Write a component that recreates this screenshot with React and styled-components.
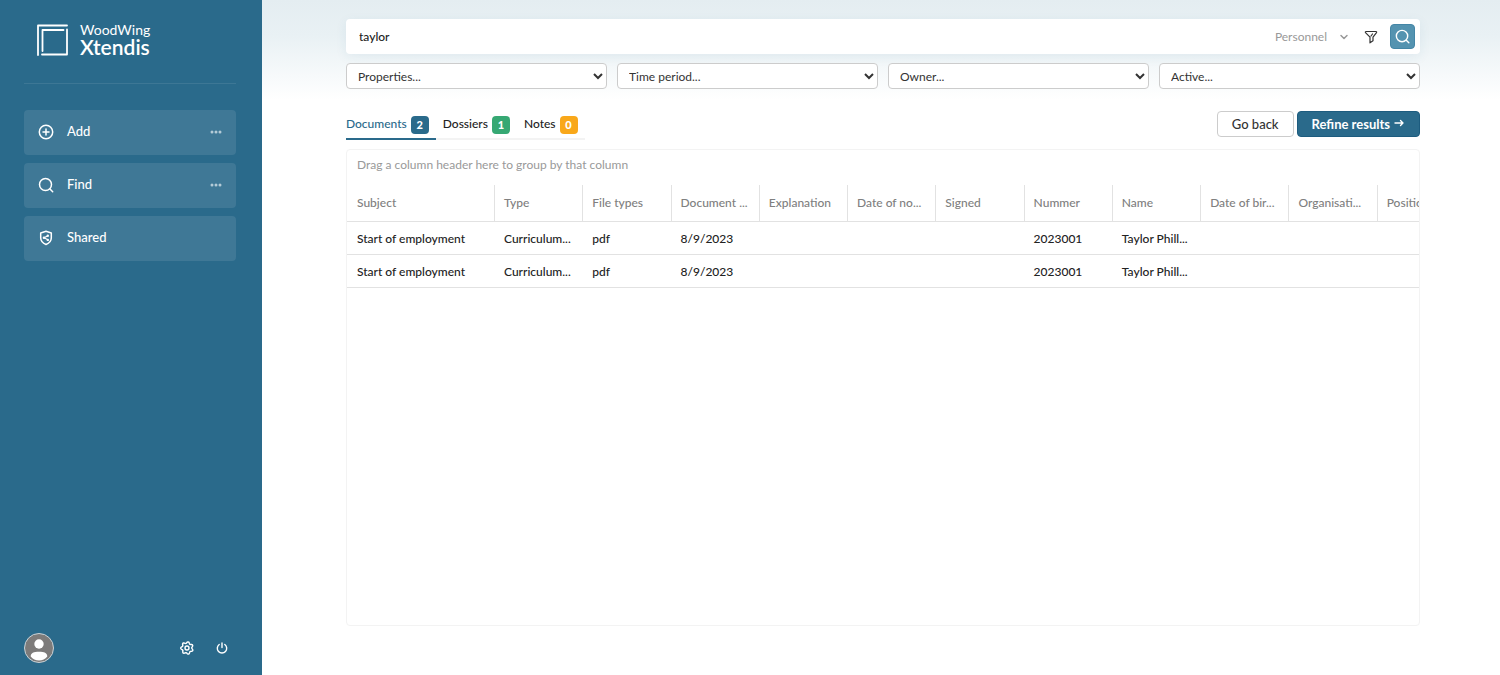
import React from "react";
import styled, { createGlobalStyle } from "styled-components";

const GlobalStyle = createGlobalStyle`
  *, *::before, *::after { box-sizing: border-box; }
  body {
    margin: 0;
    background: #fff;
    color: #222;
    font-family: Lato, "Open Sans", sans-serif;
    font-size: 12px;
    line-height: 16px;
  }
  button, input, select { font: inherit; color: inherit; }
`;

const Page = styled.div`
  display: flex;
  min-height: 100vh;
`;

const Sidebar = styled.aside`
  flex: 0 0 262px;
  display: flex;
  flex-direction: column;
  padding: 20px 26px 11px 24px;
  background: #2a6a8b;
  color: #fff;
`;

const Brand = styled.a`
  display: flex;
  align-items: center;
  gap: 12px;
  height: 64px;
  padding: 0 12px 24px;
  border-bottom: 1px solid #3d7795;
  color: #fff;
  text-decoration: none;
`;

const BrandName = styled.span`
  display: flex;
  flex-direction: column;
  font-size: 14px;
  line-height: 14px;
`;

const ProductName = styled.strong`
  font-size: 21px;
  line-height: 20px;
  font-weight: 600;
`;

const SideNav = styled.nav`
  display: flex;
  flex-direction: column;
  gap: 8px;
  margin-top: 26px;
`;

const NavButton = styled.button`
  display: flex;
  align-items: center;
  gap: 12px;
  height: 45px;
  padding: 0 14px 2px 13px;
  border: 0;
  border-radius: 4px;
  background: #3f7896;
  color: #fff;
  font-size: 13px;
  font-weight: 500;
  text-align: left;
`;

const NavLabel = styled.span`
  flex: 1;
  padding-bottom: 2px;
`;

const SideFooter = styled.div`
  display: flex;
  align-items: center;
  gap: 19px;
  margin-top: auto;
  padding-right: 6px;
`;

const AvatarButton = styled.button`
  width: 32px;
  height: 32px;
  margin-right: auto;
  padding: 0;
  border: 0;
  background: none;
`;

const IconButton = styled.button`
  display: flex;
  padding: 0;
  border: 0;
  background: none;
  color: inherit;
`;

const Main = styled.main`
  flex: 1;
  min-width: 0;
  display: flex;
  flex-direction: column;
  padding: 19px 80px 49px 84px;
  background: linear-gradient(#e4edf1 0, #e9f1f4 36px, #fff 100px);
`;

const SearchBar = styled.form`
  display: flex;
  align-items: center;
  height: 35px;
  padding: 0 5px 0 13px;
  border-radius: 4px;
  background: #fff;
  box-shadow: 0 3px 12px rgba(42, 106, 139, 0.08);
`;

const SearchInput = styled.input`
  flex: 1;
  min-width: 0;
  padding: 0;
  border: 0;
  outline: 0;
  background: none;
  font-weight: 500;
`;

const ScopeButton = styled.button`
  display: flex;
  align-items: center;
  gap: 12px;
  padding: 0;
  border: 0;
  background: none;
  color: #999;
`;

const FilterButton = styled(IconButton)`
  margin: 0 12px 0 15px;
  color: #333;
`;

const SearchButton = styled.button`
  display: flex;
  align-items: center;
  justify-content: center;
  width: 25px;
  height: 25px;
  padding: 0;
  border: 1px solid #4486a6;
  border-radius: 4px;
  background: #5493b0;
  color: #fff;
`;

const Filters = styled.div`
  display: grid;
  grid-template-columns: repeat(4, 1fr);
  gap: 10px;
  margin-top: 9px;
`;

const FilterSelect = styled.select`
  width: 100%;
  height: 26px;
  padding: 0 2px 0 7px;
  border: 1px solid #ccc;
  border-radius: 4px;
  background: #fff;
  color: #333;
`;

const ResultsBar = styled.div`
  display: flex;
  align-items: flex-end;
  justify-content: space-between;
  margin-top: 22px;
`;

const Tabs = styled.div`
  display: flex;
`;

const Tab = styled.button`
  display: flex;
  align-items: center;
  gap: 4px;
  height: 29px;
  padding: 1px 7px 0 0;
  border: 0;
  border-bottom: 2px solid ${(p) => (p["aria-selected"] ? "#2a6a8b" : "#f3f3f3")};
  background: none;
  color: ${(p) => (p["aria-selected"] ? "#2a6a8b" : "#222")};
  font-weight: 500;

  & + & { padding-left: 7px; }
`;

const TabLabel = styled.span`
  padding-bottom: 2px;
`;

const Count = styled.span`
  min-width: 18px;
  height: 18px;
  border-radius: 4px;
  background: ${(p) => p.$color};
  color: #fff;
  font-size: 11px;
  line-height: 18px;
  font-weight: 900;
  text-align: center;
`;

const Actions = styled.div`
  display: flex;
  gap: 3px;
  padding-bottom: 3px;
`;

const ActionButton = styled.button`
  display: flex;
  align-items: center;
  gap: 3px;
  height: 26px;
  padding: 0 14px;
  border: 1px solid ${(p) => (p.$primary ? "#1d5c7f" : "#ccc")};
  border-radius: 4px;
  background: ${(p) => (p.$primary ? "#2a6a8b" : "#fff")};
  color: ${(p) => (p.$primary ? "#fff" : "#333")};
  font-size: 13px;
  font-weight: ${(p) => (p.$primary ? 700 : 500)};
`;

const Panel = styled.section`
  flex: 1;
  margin-top: 9px;
  border: 1px solid #f3f3f3;
  border-radius: 4px;
  background: #fff;
  overflow: hidden;
`;

const GroupHint = styled.p`
  margin: 0;
  padding: 7px 10px 12px;
  color: #999;
`;

const Grid = styled.table`
  width: 100%;
  min-width: 1119px;
  table-layout: fixed;
  border-collapse: separate;
  border-spacing: 0;
`;

const HeadCell = styled.th`
  width: ${(p) => (p.$wide ? "148px" : "auto")};
  height: 37px;
  padding: 0 9px;
  border-right: 1px solid #e2e2e2;
  border-bottom: 1px solid #e2e2e2;
  color: #808080;
  font-weight: 500;
  text-align: left;
  white-space: nowrap;
  overflow: hidden;

  &:first-child { padding-left: 10px; }
`;

const Cell = styled.td`
  height: 33px;
  padding: 1px 9px 0;
  border-bottom: 1px solid #e2e2e2;
  font-weight: 500;
  white-space: nowrap;
  overflow: hidden;

  &:first-child { padding-left: 10px; }
`;

const Icon = ({ size = 16, box = 24, width = 2, children }) => (
  <svg
    width={size}
    height={size}
    viewBox={`0 0 ${box} ${box}`}
    fill="none"
    stroke="currentColor"
    strokeWidth={width}
    strokeLinecap="round"
    strokeLinejoin="round"
    aria-hidden="true"
  >
    {children}
  </svg>
);

const LogoMark = () => (
  <Icon size={32} box={32} width={1.8}>
    <path d="M2 31V1.500H31M6.500 27V6H27.500M31 5.500V30.500H6" />
  </Icon>
);

const PlusIcon = () => (
  <Icon size={18} box={18} width={1.5}>
    <circle cx="9" cy="9" r="6.700" />
    <path d="M9 6v6M6 9h6" />
  </Icon>
);

const MagnifierIcon = ({ size = 18 }) => (
  <Icon size={size} box={18} width={1.5}>
    <circle cx="8.500" cy="8.500" r="6" />
    <path d="M13 13l2.700 2.700" />
  </Icon>
);

const ShieldIcon = () => (
  <Icon size={18} box={18} width={1.5}>
    <path d="M9 2.300 14.300 4v4.800c0 3.400-2.400 5.500-5.300 6.700-2.900-1.200-5.300-3.300-5.300-6.700V4z" />
    <path d="M10.800 6.700 7.200 8.800l3.600 2" strokeWidth="1.100" />
    <g fill="currentColor" stroke="none">
      <circle cx="10.800" cy="6.700" r="1.200" />
      <circle cx="7" cy="8.800" r="1.300" />
      <circle cx="10.800" cy="10.900" r="1.200" />
    </g>
  </Icon>
);

const MoreIcon = () => (
  <svg width="12" height="4" viewBox="0 0 12 4" fill="#b4cbd7" aria-hidden="true">
    <circle cx="2" cy="2" r="1.500" />
    <circle cx="6" cy="2" r="1.500" />
    <circle cx="10" cy="2" r="1.500" />
  </svg>
);

const gearOutline = (() => {
  const points = [];
  for (let i = 0; i < 84; i += 1) {
    const angle = (i / 84) * Math.PI * 2;
    const radius = 5.5 + 0.8 * Math.cos(angle * 7);
    const x = 8 + radius * Math.sin(angle + 0.2);
    const y = 8 - radius * Math.cos(angle + 0.2);
    points.push(`${x.toFixed(2)} ${y.toFixed(2)}`);
  }
  return `M${points.join("L")}Z`;
})();

const GearIcon = () => (
  <Icon box={16} width={1.4}>
    <path d={gearOutline} />
    <circle cx="8" cy="8" r="2" />
  </Icon>
);

const PowerIcon = () => (
  <Icon box={16} width={1.4}>
    <path d="M8 3v4.500M5.200 4.500a4.700 4.700 0 1 0 5.600 0" />
  </Icon>
);

const ChevronIcon = () => (
  <Icon size={10} box={10} width={1.5}>
    <path d="M2 3.500 5 6.500 8 3.500" />
  </Icon>
);

const FunnelIcon = () => (
  <Icon size={14} box={14} width={1.2}>
    <path d="M2 1.500h10c.500 0 .800.600.500 1.100L9 7.200v3.600l-3 2V7.200L1.500 2.600c-.300-.500 0-1.100.500-1.100zM8.500 4 7 6" />
  </Icon>
);

const ArrowIcon = () => (
  <Icon size={12} box={12} width={1.4}>
    <path d="M2 5h8M7.500 2.500 10 5 7.500 7.500" />
  </Icon>
);

const Avatar = () => (
  <svg width="32" height="32" viewBox="0 0 32 32" aria-hidden="true">
    <circle cx="15" cy="16" r="14.500" fill="#7d7b7a" stroke="#c9d3d8" />
    <circle cx="15" cy="12" r="4.700" fill="#fff" />
    <path d="M6.700 24.500c0-3.500 3-4.700 8.300-4.700s8.300 1.200 8.300 4.700c-2 2.500-5 4-8.300 4s-6.300-1.500-8.300-4z" fill="#fff" />
  </svg>
);

const navItems = [
  { label: "Add", icon: PlusIcon, more: true },
  { label: "Find", icon: MagnifierIcon, more: true },
  { label: "Shared", icon: ShieldIcon },
];

const filters = [
  { name: "Properties", label: "Properties..." },
  { name: "Time period", label: "Time period..." },
  { name: "Owner", label: "Owner..." },
  { name: "Active", label: "Active..." },
];

const tabs = [
  { label: "Documents", count: 2, color: "#2a6a8b", active: true },
  { label: "Dossiers", count: 1, color: "#36a873" },
  { label: "Notes", count: 0, color: "#f9a81a" },
];

const columns = [
  "Subject", "Type", "File types", "Document ...", "Explanation", "Date of no...",
  "Signed", "Nummer", "Name", "Date of bir...", "Organisati...", "Position",
];

const documentRow = [
  "Start of employment", "Curriculum...", "pdf", "8/9/2023", "", "",
  "", "2023001", "Taylor Phill...", "", "", "",
];

const rows = [documentRow, documentRow];

export default function App() {
  return (
    <>
      <GlobalStyle />
      <Page>
        <Sidebar>
          <Brand href="#">
            <LogoMark />
            <BrandName>
              WoodWing
              <ProductName>Xtendis</ProductName>
            </BrandName>
          </Brand>
          <SideNav>
            {navItems.map(({ label, icon: ItemIcon, more }) => (
              <NavButton key={label} type="button">
                <ItemIcon />
                <NavLabel>{label}</NavLabel>
                {more && <MoreIcon />}
              </NavButton>
            ))}
          </SideNav>
          <SideFooter>
            <AvatarButton type="button" aria-label="Profile"><Avatar /></AvatarButton>
            <IconButton type="button" aria-label="Settings"><GearIcon /></IconButton>
            <IconButton type="button" aria-label="Log out"><PowerIcon /></IconButton>
          </SideFooter>
        </Sidebar>
        <Main>
          <SearchBar role="search" onSubmit={(e) => e.preventDefault()}>
            <SearchInput aria-label="Search" defaultValue="taylor" />
            <ScopeButton type="button">Personnel <ChevronIcon /></ScopeButton>
            <FilterButton type="button" aria-label="Filter"><FunnelIcon /></FilterButton>
            <SearchButton type="submit" aria-label="Search"><MagnifierIcon size={17} /></SearchButton>
          </SearchBar>
          <Filters>
            {filters.map(({ name, label }) => (
              <FilterSelect key={name} aria-label={name}>
                <option>{label}</option>
              </FilterSelect>
            ))}
          </Filters>
          <ResultsBar>
            <Tabs role="tablist">
              {tabs.map(({ label, count, color, active }) => (
                <Tab key={label} type="button" role="tab" aria-selected={Boolean(active)}>
                  <TabLabel>{label}</TabLabel>
                  <Count $color={color}>{count}</Count>
                </Tab>
              ))}
            </Tabs>
            <Actions>
              <ActionButton type="button">Go back</ActionButton>
              <ActionButton type="button" $primary>Refine results <ArrowIcon /></ActionButton>
            </Actions>
          </ResultsBar>
          <Panel>
            <GroupHint>Drag a column header here to group by that column</GroupHint>
            <Grid>
              <thead>
                <tr>
                  {columns.map((name, i) => (
                    <HeadCell key={name} scope="col" $wide={i === 0}>{name}</HeadCell>
                  ))}
                </tr>
              </thead>
              <tbody>
                {rows.map((row, r) => (
                  <tr key={r}>
                    {row.map((value, c) => (
                      <Cell key={columns[c]}>{value}</Cell>
                    ))}
                  </tr>
                ))}
              </tbody>
            </Grid>
          </Panel>
        </Main>
      </Page>
    </>
  );
}
